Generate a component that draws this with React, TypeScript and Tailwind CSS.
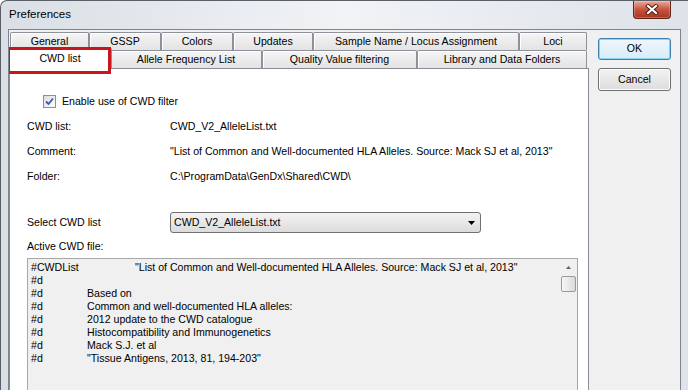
import React from 'react';

const topTabs = [
  { label: 'General', w: 'w-[79px]' },
  { label: 'GSSP', w: 'w-[72px]' },
  { label: 'Colors', w: 'w-[72px]' },
  { label: 'Updates', w: 'w-[80px]' },
  { label: 'Sample Name / Locus Assignment', w: 'w-[206px]' },
  { label: 'Loci', w: 'w-[68px]' },
];

const bottomTabs = [
  { label: 'Allele Frequency List', w: 'w-[152px]' },
  { label: 'Quality Value filtering', w: 'w-[155px]' },
  { label: 'Library and Data Folders', w: 'w-[170px]' },
];

const info = [
  { label: 'CWD list:', value: 'CWD_V2_AlleleList.txt' },
  { label: 'Comment:', value: '"List of Common and Well-documented HLA Alleles. Source: Mack SJ et al, 2013"' },
  { label: 'Folder:', value: 'C:\\ProgramData\\GenDx\\Shared\\CWD\\' },
];

const fileLines = [
  'Based on',
  'Common and well-documented HLA alleles:',
  '2012 update to the CWD catalogue',
  'Histocompatibility and Immunogenetics',
  'Mack S.J. et al',
  '"Tissue Antigens, 2013, 81, 194-203"',
];

function Tab({ label, w }: { label: string; w: string }) {
  return (
    <div
      className={`${w} h-full flex items-center justify-center border border-b-0 border-[#8e9199] rounded-t-[2px] bg-linear-to-b from-[#f5f5f5] to-[#e3e3e3] shadow-[inset_1px_1px_0_#ffffff]`}
    >
      {label}
    </div>
  );
}

function CloseButton() {
  return (
    <div className="w-[38px] h-[18px] flex items-center justify-center rounded-b-[4px] border border-t-0 border-[#5e2118] bg-linear-to-b from-[#e9a99c] via-[#c8533e] to-[#a83520] shadow-[inset_0_0_0_1px_rgba(255,255,255,0.25)]">
      <svg width="14" height="11" viewBox="0 0 14 11">
        <path d="M3 2 L11 9 M11 2 L3 9" stroke="#4a1a12" strokeWidth="4" strokeLinecap="square" />
        <path d="M3 2 L11 9 M11 2 L3 9" stroke="#ffffff" strokeWidth="2.2" strokeLinecap="square" />
      </svg>
    </div>
  );
}

function Checkbox() {
  return (
    <div className="w-[13px] h-[13px] border border-[#8e8f8f] bg-linear-to-br from-[#dcdcdc] to-[#ffffff] flex items-center justify-center">
      <svg width="9" height="9" viewBox="0 0 9 9">
        <path d="M1 4.5 L3.5 7 L8 1.5" stroke="#3d5aa8" strokeWidth="1.8" fill="none" />
      </svg>
    </div>
  );
}

export default function App() {
  return (
    <div className="w-[688px] h-[390px] overflow-hidden flex flex-col rounded-tl-[7px] border-l border-t border-[#5b6068] bg-linear-to-r from-[#d9dfe5] via-[#f1f3f6] to-[#dde3e9] font-['Liberation_Sans',Arial,sans-serif] text-black">
      {/* title bar */}
      <div className="h-[28px] shrink-0 flex justify-between pl-[8px] pr-[17px]">
        <div className="self-center text-[11.5px]">Preferences</div>
        <CloseButton />
      </div>

      {/* client area */}
      <div className="ml-[7px] w-[673px] flex-1 min-h-0 overflow-hidden flex border-l border-t border-r border-[#7e848c] bg-[#f0f0f0] text-[10.6px]">
        <div className="w-[580px] shrink-0 flex flex-col pt-[2px]">
          <div className="h-[18px] shrink-0 flex pl-[1px]">
            {topTabs.map((t) => (
              <Tab key={t.label} label={t.label} w={t.w} />
            ))}
          </div>
          <div className="h-[18px] shrink-0 flex pl-[1px]">
            <div className="relative z-10 w-[104px] h-[21px] -mx-[2px] -mt-[2px] flex items-center justify-center border border-b-0 border-[#8e9199] rounded-t-[2px] bg-white">
              CWD list
              <div className="absolute -left-[2px] -top-[2px] w-[104px] h-[27px] border-[3px] border-[#c8161d]" />
            </div>
            {bottomTabs.map((t) => (
              <Tab key={t.label} label={t.label} w={t.w} />
            ))}
          </div>

          <div className="flex-1 shrink-0 border border-[#898c95] bg-white pl-[17px] pt-[20px]">
            <div className="h-[25px] flex items-center gap-[6px] pl-[16px]">
              <Checkbox />
              <span>Enable use of CWD filter</span>
            </div>
            {info.map((r) => (
              <div key={r.label} className="h-[25px] flex items-center">
                <span className="w-[143px]">{r.label}</span>
                <span>{r.value}</span>
              </div>
            ))}

            <div className="mt-[23px] h-[21px] flex items-center">
              <span className="w-[143px]">Select CWD list</span>
              <div className="w-[311px] h-[21px] flex items-center justify-between pl-[3px] pr-[5px] rounded-[3px] border border-[#707070] bg-linear-to-b from-[#f3f3f3] to-[#dcdcdc]">
                <span>CWD_V2_AlleleList.txt</span>
                <svg width="7" height="4" viewBox="0 0 7 4">
                  <path d="M0 0 H7 L3.5 4 Z" fill="#000" />
                </svg>
              </div>
            </div>

            <div className="mt-[6px] h-[14px] leading-[14px]">Active CWD file:</div>

            <div className="mt-[5px] w-[551px] h-[150px] flex border border-[#a7a7a7] bg-[#f0f0f0]">
              <div className="flex-1 pl-[3px] pt-[2px] leading-[13px]">
                <div className="flex">
                  <span className="w-[104px]">#CWDList</span>
                  <span>"List of Common and Well-documented HLA Alleles. Source: Mack SJ et al, 2013"</span>
                </div>
                <div>#d</div>
                {fileLines.map((l) => (
                  <div key={l} className="flex">
                    <span className="w-[56px]">#d</span>
                    <span>{l}</span>
                  </div>
                ))}
              </div>
              <div className="w-[17px] flex flex-col">
                <div className="h-[17px] flex items-center justify-center">
                  <svg width="5" height="3" viewBox="0 0 5 3">
                    <path d="M0 3 L2.5 0 L5 3 Z" fill="#606060" />
                  </svg>
                </div>
                <div className="mx-[1px] h-[16px] rounded-[2px] border border-[#9a9a9a] bg-linear-to-r from-[#f6f6f6] to-[#dadada]" />
              </div>
            </div>
          </div>
        </div>

        <div className="flex-1 flex flex-col gap-[8px] pl-[9px] pt-[8px]">
          <div className="w-[73px] h-[22px] flex items-center justify-center rounded-[3px] border border-[#3c7fb1] bg-linear-to-b from-[#eef7fc] to-[#d8ecf7] shadow-[inset_0_0_0_1px_#8fd3f1]">
            OK
          </div>
          <div className="w-[73px] h-[23px] flex items-center justify-center rounded-[3px] border border-[#707070] bg-linear-to-b from-[#f2f2f2] to-[#dddddd] shadow-[inset_0_0_0_1px_#fcfcfc]">
            Cancel
          </div>
        </div>
      </div>
    </div>
  );
}
